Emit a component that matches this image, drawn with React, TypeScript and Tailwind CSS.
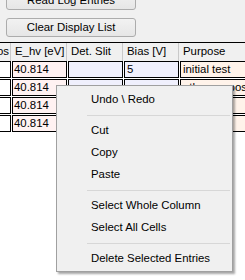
import React from "react";

type Row = { e: string; slit: string; bias: string; purpose: string };

const rows: Row[] = [
  { e: "40.814", slit: "", bias: "5", purpose: "initial test" },
  { e: "40.814", slit: "", bias: "", purpose: "other purpose" },
  { e: "40.814", slit: "", bias: "", purpose: "" },
  { e: "40.814", slit: "", bias: "", purpose: "" },
];

const headers = ["Pos", "E_hv [eV]", "Det. Slit", "Bias [V]", "Purpose"];

type MenuEntry = { label?: string; sep?: boolean };
const menu: MenuEntry[] = [
  { label: "Undo \\ Redo" },
  { sep: true },
  { label: "Cut" },
  { label: "Copy" },
  { label: "Paste" },
  { sep: true },
  { label: "Select Whole Column" },
  { label: "Select All Cells" },
  { sep: true },
  { label: "Delete Selected Entries" },
];

function Button({ label, extra }: { label: string; extra: string }) {
  return (
    <div
      className={`w-[130px] h-[19px] ml-[6px] flex items-center justify-center rounded-[3px] border border-[#acacac] bg-gradient-to-b from-[#f2f2f2] to-[#e6e6e6] text-black ${extra}`}
    >
      {label}
    </div>
  );
}

export default function App() {
  return (
    <div className="relative w-[245px] h-[280px] overflow-hidden bg-white font-['Liberation_Sans',Arial,sans-serif] text-[11.4px] leading-none text-black">
      {/* top button area */}
      <div className="h-[42px] bg-[#f0f0f0] flex flex-col">
        <Button label="Read Log Entries" extra="-mt-[9px]" />
        <Button label="Clear Display List" extra="mt-[8px]" />
      </div>

      {/* table */}
      <div className="border-t border-black bg-white">
        <div className="flex h-[18px] bg-[#f0f0f0] -ml-[45px]">
          {headers.map((h, i) => (
            <div
              key={h}
              className={`h-full flex items-center border-r border-[#c9c9c9] shrink-0 ${
                i === 0 ? "w-[56px] justify-end pr-[1px]" : i === 4 ? "w-[80px] pl-[4px]" : "w-[56px] pl-[4px]"
              }`}
            >
              {h}
            </div>
          ))}
        </div>
        <div className="flex flex-col -ml-[45px]">
          {rows.map((r, ri) => (
            <div key={ri} className="flex h-[17px] mb-[1px]">
              <div className="ml-[1px] w-[55px] h-full border border-black bg-white shrink-0" />
              <div className="ml-[1px] w-[55px] h-full border border-black bg-[#fff2f2] shrink-0 flex items-center pl-[1px] whitespace-nowrap overflow-hidden">
                {r.e}
              </div>
              <div className="ml-[1px] w-[55px] h-full border border-black bg-[#f0f0fd] shrink-0 flex items-center pl-[1px] whitespace-nowrap overflow-hidden">
                {r.slit}
              </div>
              <div className="ml-[1px] w-[55px] h-full border border-black bg-[#f0f0fd] shrink-0 flex items-center pl-[2px] whitespace-nowrap overflow-hidden">
                {r.bias}
              </div>
              <div className="ml-[1px] w-[90px] h-full border border-black bg-[#fff3ea] shrink-0 flex items-center pl-[2px] whitespace-nowrap overflow-hidden">
                {r.purpose}
              </div>
            </div>
          ))}
        </div>
      </div>

      {/* context menu */}
      <div className="absolute left-[56px] top-[85px] w-[177px] border border-[#a0a0a0] bg-[#f0f0f0] pt-[3px] pb-[1px] shadow-[2px_2px_2px_rgba(0,0,0,0.35)]">
        {menu.map((m, i) =>
          m.sep ? (
            <div key={i} className="h-[9px] flex items-center pl-[30px] pr-[2px]">
              <div className="h-[1px] w-full bg-[#d7d7d7]" />
            </div>
          ) : (
            <div key={i} className="h-[22px] flex items-center pl-[34px] whitespace-nowrap">
              {m.label}
            </div>
          )
        )}
      </div>
    </div>
  );
}
